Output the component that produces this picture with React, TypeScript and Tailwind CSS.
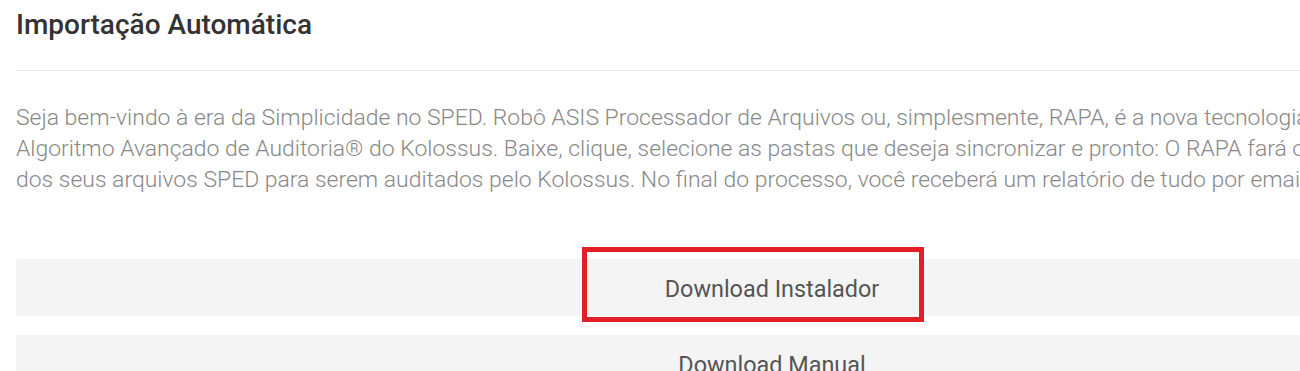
const lines = [
  "Seja bem-vindo à era da Simplicidade no SPED. Robô ASIS Processador de Arquivos ou, simplesmente, RAPA, é a nova tecnologia da Kolossus que",
  "Algoritmo Avançado de Auditoria® do Kolossus. Baixe, clique, selecione as pastas que deseja sincronizar e pronto: O RAPA fará o envio automático",
  "dos seus arquivos SPED para serem auditados pelo Kolossus. No final do processo, você receberá um relatório de tudo por email.",
];

function DownloadBar({ label, highlight }: { label: string; highlight?: boolean }) {
  return (
    <div className="relative">
      <button className="w-full h-[57px] pt-[4px] rounded-[3px] bg-[#f4f4f4] text-[23.4px] text-[#555] flex items-center justify-center">
        {label}
      </button>
      {highlight && (
        <div className="absolute left-[566px] top-[-12px] w-[342px] h-[75px] border-[5px] border-[#e41e26] pointer-events-none" />
      )}
    </div>
  );
}

export default function App() {
  return (
    <div className="w-[1300px] h-[371px] overflow-hidden bg-white font-['Roboto',sans-serif]">
      <div className="w-[1544px] px-4">
        <h2 className="h-[52px] pt-[6px] text-[28px] font-medium text-[#333] leading-[38px]">
          Importação Automática
        </h2>
        <div className="mt-[18px] border-t border-[#e9e9e9]" />
        <p className="mt-[31px] text-[22.95px] font-light leading-[31px] text-[#888] whitespace-nowrap">
          {lines.map((l) => (
            <span key={l} className="block">
              {l}
            </span>
          ))}
        </p>
        <div className="mt-[64px] flex flex-col gap-[19px]">
          <DownloadBar label="Download Instalador" highlight />
          <DownloadBar label="Download Manual" />
        </div>
      </div>
    </div>
  );
}
